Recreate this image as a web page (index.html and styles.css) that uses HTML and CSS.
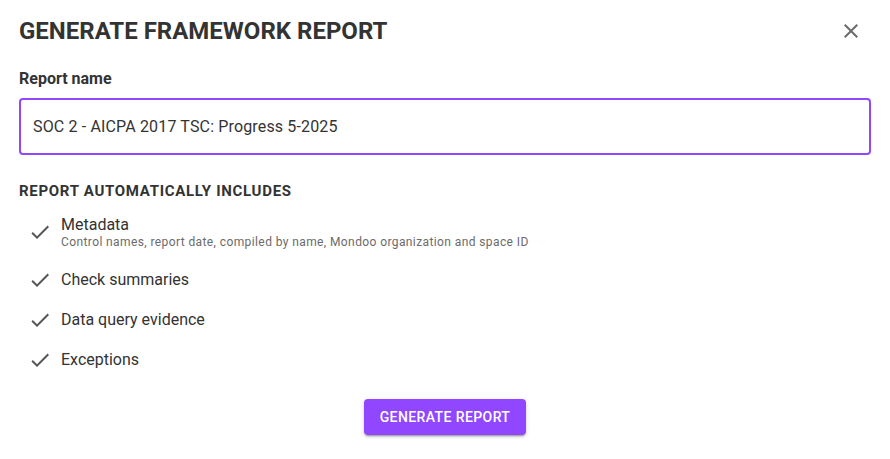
FILE: index.html
```html
<!DOCTYPE html>
<html>
<head>
<meta charset="utf-8">
<link rel="stylesheet" href="styles.css">
</head>
<body>
<div class="dialog">
  <div class="header">
    <h2 class="title">GENERATE FRAMEWORK REPORT</h2>
    <button class="close" aria-label="close">
      <svg viewBox="0 0 24 24" width="24" height="24"><path d="M19 6.41 17.59 5 12 10.59 6.41 5 5 6.41 10.59 12 5 17.59 6.41 19 12 13.41 17.59 19 19 17.59 13.41 12z" fill="currentColor"/></svg>
    </button>
  </div>
  <label class="label">Report name</label>
  <div class="input">SOC 2 - AICPA 2017 TSC: Progress 5-2025</div>
  <h3 class="section">REPORT AUTOMATICALLY INCLUDES</h3>
  <ul class="list">
    <li class="item item-first">
      <svg class="check" viewBox="0 0 24 24" width="24" height="24"><path d="M9 16.17 4.83 12l-1.42 1.41L9 19 21 7l-1.41-1.41z" fill="currentColor"/></svg>
      <div class="text">
        <div class="primary">Metadata</div>
        <div class="secondary">Control names, report date, compiled by name, Mondoo organization and space ID</div>
      </div>
    </li>
    <li class="item">
      <svg class="check" viewBox="0 0 24 24" width="24" height="24"><path d="M9 16.17 4.83 12l-1.42 1.41L9 19 21 7l-1.41-1.41z" fill="currentColor"/></svg>
      <div class="text"><div class="primary">Check summaries</div></div>
    </li>
    <li class="item">
      <svg class="check" viewBox="0 0 24 24" width="24" height="24"><path d="M9 16.17 4.83 12l-1.42 1.41L9 19 21 7l-1.41-1.41z" fill="currentColor"/></svg>
      <div class="text"><div class="primary">Data query evidence</div></div>
    </li>
    <li class="item">
      <svg class="check" viewBox="0 0 24 24" width="24" height="24"><path d="M9 16.17 4.83 12l-1.42 1.41L9 19 21 7l-1.41-1.41z" fill="currentColor"/></svg>
      <div class="text"><div class="primary">Exceptions</div></div>
    </li>
  </ul>
  <div class="actions">
    <button class="primary-btn">GENERATE REPORT</button>
  </div>
</div>
</body>
</html>
```
FILE: styles.css
```css
html, body {
  margin: 0;
  padding: 0;
  background: #ffffff;
}
body {
  font-family: Roboto, "Liberation Sans", sans-serif;
  color: #333333;
}
.dialog {
  width: 890px;
  height: 459px;
  box-sizing: border-box;
  padding: 14px 19px 0 19px;
}
.header {
  display: flex;
  align-items: center;
  justify-content: space-between;
}
.title {
  margin: 0;
  font-size: 24px;
  font-weight: 700;
  line-height: 34px;
  color: #333333;
}
.close {
  border: 0;
  background: none;
  padding: 0;
  margin-right: 8px;
  color: #6b6b6b;
  width: 24px;
  height: 24px;
  display: flex;
}
.label {
  display: block;
  margin-top: 21px;
  font-size: 16px;
  font-weight: 700;
  line-height: 20px;
  color: #333333;
}
.input {
  margin-top: 9px;
  height: 57px;
  box-sizing: border-box;
  border: 2px solid #9147ff;
  border-radius: 4px;
  padding: 0 12px;
  display: flex;
  align-items: center;
  font-size: 16px;
  letter-spacing: 0.15px;
  color: #333333;
}
.section {
  margin: 26px 0 0 0;
  font-size: 15px;
  font-weight: 700;
  line-height: 20px;
  letter-spacing: 0.7px;
  color: #333333;
}
.list {
  list-style: none;
  margin: 3px 0 0 0;
  padding: 0;
}
.item {
  display: flex;
  align-items: center;
  padding-left: 9px;
  min-height: 40px;
}
.item-first {
  min-height: 56px;
}
.check {
  color: #555555;
  width: 24px;
  height: 24px;
  margin-right: 9px;
  flex: none;
}
.primary {
  font-size: 16px;
  line-height: 20px;
  color: #333333;
}
.secondary {
  font-size: 12px;
  line-height: 15px;
  letter-spacing: 0.4px;
  color: #6b6b6b;
}
.actions {
  display: flex;
  justify-content: center;
  margin-top: 19px;
}
.primary-btn {
  border: 0;
  background: #9147ff;
  color: #ffffff;
  font-family: Roboto, "Liberation Sans", sans-serif;
  font-size: 14px;
  font-weight: 500;
  letter-spacing: 0.4px;
  height: 36px;
  padding: 0 16px;
  border-radius: 4px;
  box-shadow: 0 3px 1px -2px rgba(0,0,0,0.2), 0 2px 2px 0 rgba(0,0,0,0.14), 0 1px 5px 0 rgba(0,0,0,0.12);
}
```
